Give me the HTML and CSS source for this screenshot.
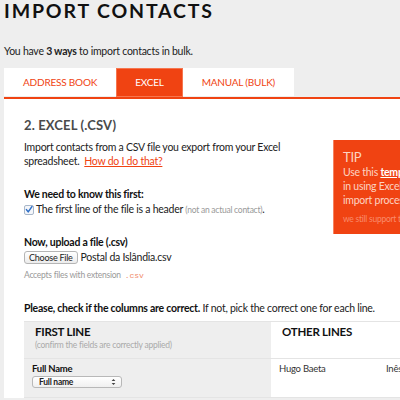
FILE: index.html
```html
<!DOCTYPE html>
<html>
<head>
<meta charset="utf-8">
<link rel="stylesheet" href="styles.css">
</head>
<body>
<div class="page">
  <h1 class="title">IMPORT CONTACTS</h1>
  <p class="intro">You have <b>3 ways</b> to import contacts in bulk.</p>
  <div class="tabs">
    <div class="tab">ADDRESS BOOK</div>
    <div class="tab active">EXCEL</div>
    <div class="tab">MANUAL (BULK)</div>
  </div>
  <div class="panel">
    <div class="row">
      <div class="main">
        <h2 class="step">2. EXCEL (.CSV)</h2>
        <p class="desc">Import contacts from a CSV file you export from your Excel spreadsheet.&nbsp; <a href="#" class="link">How do I do that?</a></p>
        <p class="label">We need to know this first:</p>
        <div class="check">
          <span class="box"><svg width="9" height="9" viewBox="0 0 9 9"><path d="M1.6 4.6 L3.6 7.2 L7.8 1.2" fill="none" stroke="#2f6fc6" stroke-width="1.7" stroke-linecap="round" stroke-linejoin="round"/></svg></span>
          <span>The first line of the file is a header <span class="muted">(not an actual contact)</span>.</span>
        </div>
        <p class="label upload">Now, upload a file (.csv)</p>
        <div class="file">
          <span class="btn">Choose File</span>
          <span class="fname">Postal da Islândia.csv</span>
        </div>
        <p class="accepts">Accepts files with extension <code>.csv</code></p>
      </div>
      <aside class="tip">
        <div class="tip-title">TIP</div>
        <p class="tip-text">Use this <a href="#">template</a> if you have any trouble<br>in using Excel or want to speed up the<br>import process.</p>
        <p class="tip-note">we still support the old format</p>
      </aside>
    </div>
    <p class="check-cols"><b>Please, check if the columns are correct.</b> If not, pick the correct one for each line.</p>
    <div class="table">
      <div class="cell first head">
        <div class="th">FIRST LINE</div>
        <div class="sub">(confirm the fields are correctly applied)</div>
      </div>
      <div class="cell other head">
        <div class="th">OTHER LINES</div>
      </div>
      <div class="cell first body">
        <div class="field">Full Name</div>
        <div class="select"><span>Full name</span><svg width="5" height="8" viewBox="0 0 5 8"><path d="M0.6 3 L2.5 0.9 L4.4 3 Z M0.6 5 L2.5 7.1 L4.4 5 Z" fill="#444"/></svg></div>
      </div>
      <div class="cell other body">
        <div class="vals"><span>Hugo Baeta</span><span>Inês Silva</span></div>
      </div>
    </div>
  </div>
</div>
</body>
</html>
```
FILE: styles.css
```css
html, body {
  margin: 0;
  padding: 0;
  background: #eeeeee;
  overflow: hidden;
  width: 400px;
  height: 400px;
}
body {
  font-family: Lato, "Open Sans", sans-serif;
  color: #222;
  letter-spacing: -0.25px;
}
.page {
  width: 620px;
  padding-left: 4px;
}
.title {
  margin: 0;
  padding-top: 1px;
  font-size: 19.5px;
  line-height: 20px;
  font-weight: 700;
  letter-spacing: 1.85px;
  color: #111;
}
.intro {
  margin: 23px 0 0;
  font-size: 10.5px;
  line-height: 14px;
  color: #222;
}
.tabs {
  display: flex;
  margin-top: 10px;
  height: 29px;
  border-bottom: 2px solid #f04312;
}
.tab {
  background: #fff;
  color: #f04312;
  font-size: 10px;
  line-height: 29px;
  padding: 0 19px;
  margin-bottom: 1px;
  letter-spacing: -0.2px;
}
.tab.active {
  background: #f04312;
  color: #fff;
  box-shadow: inset 0 0 0 1px #f6764f;
  margin-bottom: 0;
}
.panel {
  background: #fff;
  padding: 18px 20px 0;
}
.row {
  display: flex;
  gap: 20px;
  align-items: flex-start;
}
.main {
  width: 289px;
}
.step {
  margin: 0;
  font-size: 13px;
  line-height: 16px;
  font-weight: 700;
  letter-spacing: 0.15px;
  color: #4a4a4a;
}
.desc {
  margin: 7px 0 0;
  font-size: 10.5px;
  line-height: 14px;
  color: #222;
}
.link {
  color: #f04312;
  text-decoration: underline;
}
.label {
  margin: 19px 0 0;
  font-size: 10.5px;
  line-height: 14px;
  font-weight: 700;
  color: #111;
}
.check {
  display: flex;
  align-items: center;
  gap: 2px;
  margin-top: 1px;
  font-size: 10.5px;
  line-height: 14px;
  color: #222;
}
.box {
  display: inline-flex;
  width: 8px;
  height: 8px;
  border: 1px solid #a9b7c9;
  border-radius: 2px;
  background: #f4f6fa;
  align-items: center;
  justify-content: center;
}
.muted {
  color: #999;
  font-size: 8.5px;
}
.upload { margin-top: 18px; }
.file {
  display: flex;
  align-items: center;
  gap: 3px;
  margin-top: 1px;
  height: 14px;
}
.btn {
  font-size: 9px;
  line-height: 11px;
  padding: 0 4px;
  border: 1px solid #b5b5b5;
  border-radius: 3px;
  background: linear-gradient(#fff, #ececec);
  color: #222;
}
.fname {
  font-size: 10.5px;
  color: #222;
}
.accepts {
  margin: 5px 0 0;
  font-size: 8.5px;
  line-height: 12px;
  color: #999;
}
.accepts code {
  font-family: "Liberation Mono", monospace;
  color: #f08a6a;
  font-size: 8px;
  letter-spacing: 0;
  margin-left: 2px;
}
.tip {
  margin-top: 23px;
  width: 220px;
  flex-shrink: 0;
  background: #f04312;
  border-left: 1px solid #f7825f;
  padding: 10px 10px 9px 9px;
  color: #fcd3c3;
}
.tip-title {
  font-size: 13px;
  line-height: 14px;
  font-weight: 400;
}
.tip-text {
  margin: 1px 0 0;
  font-size: 10.5px;
  line-height: 14px;
  white-space: nowrap;
}
.tip-text a {
  color: #fff;
  font-weight: 700;
}
.tip-note {
  margin: 6px 0 0;
  font-size: 8.5px;
  line-height: 12px;
  color: #f98b6c;
}
.check-cols {
  margin: 19px 0 0;
  font-size: 10.5px;
  line-height: 14px;
  color: #222;
}
.check-cols b { color: #111; }
.table {
  display: grid;
  grid-template-columns: 247px 300px;
  margin-top: 6px;
  border-top: 1px solid #e4e4e4;
}
.cell {
  border-bottom: 1px solid #e4e4e4;
}
.cell.first { background: #eeeeee; }
.cell.head {
  height: 33px;
  padding: 3px 0 0 11px;
}
.th {
  font-size: 11.5px;
  line-height: 14px;
  font-weight: 700;
  color: #111;
}
.sub {
  font-size: 8.5px;
  line-height: 12px;
  color: #aaa;
}
.cell.body {
  height: 34px;
  padding: 4px 0 0 8px;
}
.field {
  font-size: 9.5px;
  font-weight: 700;
  line-height: 12px;
  color: #111;
}
.select {
  display: flex;
  align-items: center;
  justify-content: space-between;
  box-sizing: border-box;
  width: 90px;
  height: 12px;
  margin-top: 1px;
  padding: 0 5px 0 6px;
  border: 1px solid #b8b8b8;
  border-radius: 3px;
  background: linear-gradient(#fff, #f0f0f0);
  font-size: 8.5px;
  font-weight: 700;
  color: #222;
}
.vals {
  display: flex;
  font-size: 9.5px;
  line-height: 12px;
  color: #333;
}
.vals span { width: 107px; }
```
